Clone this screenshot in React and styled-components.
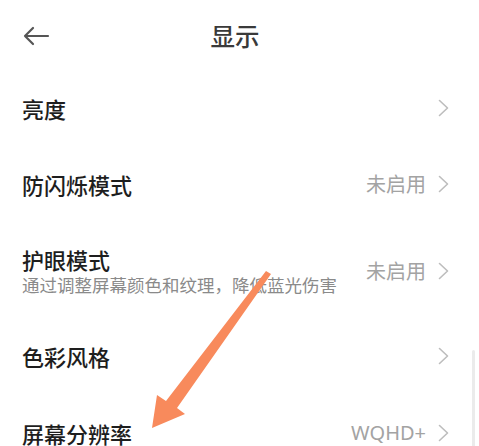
import React from "react";
import styled, { createGlobalStyle } from "styled-components";

const Global = createGlobalStyle`
  html, body { margin: 0; padding: 0; background: #fff; }
  body { font-family: "Noto Sans CJK SC", "Noto Sans", sans-serif; }
  #root { width: 479px; height: 446px; overflow: hidden; }
`;

const Page = styled.div`
  position: relative;
  width: 479px;
  height: 446px;
  overflow: hidden;
  background: #fff;
`;

const Header = styled.div`
  position: relative;
  height: 70px;
  display: flex;
  align-items: center;
  justify-content: center;
  padding-right: 9px;
`;

const BackBtn = styled.div`
  position: absolute;
  left: 22px;
  top: 26px;
  width: 28px;
  height: 20px;
  display: flex;
`;

const Title = styled.div`
  font-size: 24.5px;
  font-weight: 500;
  color: #3a3a3a;
  line-height: 1;
  margin-top: 2px;
`;

const Row = styled.div`
  height: ${(p) => p.$h}px;
  display: flex;
  align-items: center;
  padding: 0 30px 0 22px;
`;

const Texts = styled.div`
  flex: 1;
  display: flex;
  flex-direction: column;
  gap: ${(p) => (p.$sub ? "6px" : "0")};
`;

const Label = styled.div`
  font-size: 22px;
  font-weight: 500;
  color: #1e1e1e;
  line-height: 22px;
`;

const Sub = styled.div`
  font-size: 17.5px;
  color: #8a8a8a;
  line-height: 18px;
  white-space: nowrap;
`;

const Value = styled.div`
  font-size: 20px;
  color: #a3a3a3;
  line-height: 20px;
  margin-right: 12px;
  font-family: ${(p) => (p.$latin ? '"Noto Sans", sans-serif' : 'inherit')};
`;

const Chevron = styled.svg`
  width: 11px;
  height: 18px;
  flex: none;
`;

const Scrollbar = styled.div`
  position: absolute;
  left: 472px;
  top: 350px;
  width: 3px;
  height: 110px;
  border-radius: 2px;
  background: #ebebeb;
`;

const Overlay = styled.svg`
  position: absolute;
  left: 0;
  top: 0;
  width: 479px;
  height: 446px;
  pointer-events: none;
`;

const Arrow = () => (
  <Chevron viewBox="0 0 11 18">
    <path d="M1.5 1.5 L9.5 9 L1.5 16.5" fill="none" stroke="#bdbdbd" strokeWidth="1.6" strokeLinecap="round" strokeLinejoin="round" />
  </Chevron>
);

const items = [
  { label: "亮度", h: 76 },
  { label: "防闪烁模式", value: "未启用", h: 76 },
  { label: "护眼模式", sub: "通过调整屏幕颜色和纹理，降低蓝光伤害", value: "未启用", h: 98 },
  { label: "色彩风格", h: 72 },
  { label: "屏幕分辨率", value: "WQHD+", latin: true, h: 82 },
];

export default function App() {
  return (
    <>
      <Global />
      <Page>
        <Header>
          <BackBtn>
            <svg width="28" height="20" viewBox="0 0 28 20">
              <path d="M26 10 H3 M11 2 L3 10 L11 18" fill="none" stroke="#555" strokeWidth="2.2" strokeLinecap="round" strokeLinejoin="round" />
            </svg>
          </BackBtn>
          <Title>显示</Title>
        </Header>
        {items.map((it) => (
          <Row key={it.label} $h={it.h}>
            <Texts $sub={!!it.sub}>
              <Label>{it.label}</Label>
              {it.sub && <Sub>{it.sub}</Sub>}
            </Texts>
            {it.value && <Value $latin={it.latin}>{it.value}</Value>}
            <Arrow />
          </Row>
        ))}
        <Scrollbar />
        <Overlay viewBox="0 0 479 446">
          <polygon
            points="266,271 271,274 177,408 185,414 152,428 157,395 166,401"
            fill="#f88a5c"
            strokeLinejoin="round"
          />
        </Overlay>
      </Page>
    </>
  );
}
